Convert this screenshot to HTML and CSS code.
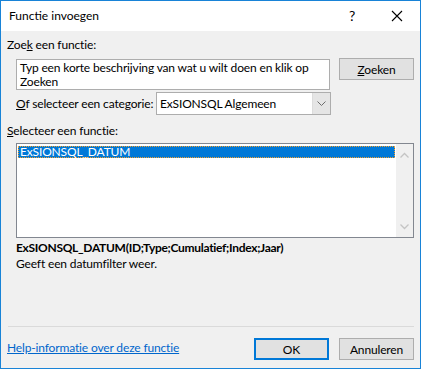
FILE: index.html
```
<!DOCTYPE html>
<html lang="nl">
<head>
    <meta charset="UTF-8">
    <title>Functie invoegen</title>
    <link rel="stylesheet" href="styles.css">
</head>
<body>
    <div class="dialog">
        <div class="title-bar">
            <span class="title-text">Functie invoegen</span>
            <span class="title-help">?</span>
            <svg class="title-close" width="12" height="12" viewBox="0 0 12 12">
                <path d="M1 1L11 11M11 1L1 11" stroke="#000" stroke-width="1.1" fill="none"/>
            </svg>
        </div>
        <div class="content">
            <div class="label">Zoe<u>k</u> een functie:</div>
            <div class="search-row">
                <div class="search-box">Typ een korte beschrijving van wat u wilt doen en klik op Zoeken</div>
                <button class="btn btn-search"><u>Z</u>oeken</button>
            </div>
            <div class="category-row">
                <span class="category-label"><u>O</u>f selecteer een categorie:</span>
                <div class="select">
                    <span class="select-value">ExSIONSQL Algemeen</span>
                    <span class="select-arrow">
                        <svg width="9" height="6" viewBox="0 0 9 6"><path d="M0.5 0.5L4.5 4.5L8.5 0.5" stroke="#6d6d6d" fill="none"/></svg>
                    </span>
                </div>
            </div>
            <div class="label label-list"><u>S</u>electeer een functie:</div>
            <div class="listbox">
                <div class="list-items">
                    <div class="list-item selected">ExSIONSQL_DATUM</div>
                </div>
                <div class="scrollbar">
                    <svg width="9" height="6" viewBox="0 0 9 6"><path d="M0.5 5.5L4.5 1.5L8.5 5.5" stroke="#c4c4c4" stroke-width="1.3" fill="none"/></svg>
                    <svg width="9" height="6" viewBox="0 0 9 6"><path d="M0.5 0.5L4.5 4.5L8.5 0.5" stroke="#c4c4c4" stroke-width="1.3" fill="none"/></svg>
                </div>
            </div>
            <div class="signature">ExSIONSQL_DATUM(ID;Type;Cumulatief;Index;Jaar)</div>
            <div class="description">Geeft een datumfilter weer.</div>
            <div class="separator"></div>
            <div class="footer">
                <a class="help-link" href="#">Help-informatie over deze functie</a>
                <button class="btn btn-ok">OK</button>
                <button class="btn">Annuleren</button>
            </div>
        </div>
    </div>
</body>
</html>
```

FILE: styles.css
```
body {
    margin: 0;
    font-family: Lato, 'Noto Sans', sans-serif;
    font-size: 12px;
    letter-spacing: -0.15px;
    color: #000;
}
.dialog {
    width: 421px;
    height: 369px;
    box-sizing: border-box;
    border: 1px solid #1883d7;
    background: #f0f0f0;
    display: flex;
    flex-direction: column;
}
.title-bar {
    height: 30px;
    background: #fff;
    display: flex;
    align-items: center;
    padding-left: 8px;
}
.title-text {
    flex: 1;
    font-size: 12px;
    letter-spacing: 0;
    margin-top: -1px;
}
.title-help {
    font-size: 14px;
    margin-right: 36px;
    margin-top: -2px;
}
.title-close {
    margin-right: 17px;
}
.content {
    padding: 0 6px 0 6px;
    display: flex;
    flex-direction: column;
}
.label {
    line-height: 16px;
    margin-top: 6px;
}
.label-list {
    margin-top: 8px;
}
.search-row {
    display: flex;
    align-items: flex-start;
    margin-top: 6px;
    margin-left: 9px;
}
.search-box {
    width: 314px;
    height: 31px;
    box-sizing: border-box;
    border: 1px solid #adadad;
    background: #fff;
    padding: 1px 3px;
    line-height: 14px;
}
.btn {
    width: 75px;
    height: 22px;
    box-sizing: border-box;
    border: 1px solid #adadad;
    background: #e1e1e1;
    font-family: inherit;
    font-size: 12px;
    letter-spacing: inherit;
    padding: 0;
    color: #000;
}
.btn-search {
    margin-left: 9px;
    margin-top: -1px;
}
.category-row {
    display: flex;
    align-items: center;
    margin-top: 2px;
    margin-left: 9px;
}
.category-label {
    width: 140px;
    white-space: nowrap;
}
.select {
    width: 175px;
    height: 23px;
    box-sizing: border-box;
    border: 1px solid #adadad;
    background: #fff;
    display: flex;
}
.select-value {
    flex: 1;
    line-height: 21px;
    padding-left: 3px;
}
.select-arrow {
    width: 17px;
    background: #e5e5e5;
    border-left: 1px solid #dcdcdc;
    display: flex;
    align-items: center;
    justify-content: center;
}
.listbox {
    margin: 4px 0 0 9px;
    width: 398px;
    height: 95px;
    box-sizing: border-box;
    border: 1px solid #828790;
    background: #fff;
    display: flex;
}
.list-items {
    flex: 1;
    padding: 2px 1px;
}
.list-item {
    height: 12px;
    line-height: 12px;
    padding-left: 2px;
}
.list-item.selected {
    background: #0078d7;
    color: #fff;
    outline: 1px dotted #f0a030;
    outline-offset: -1px;
}
.scrollbar {
    width: 17px;
    background: #f0f0f0;
    display: flex;
    flex-direction: column;
    justify-content: space-between;
    align-items: center;
    padding: 8px 0 7px 0;
    box-sizing: border-box;
}
.signature {
    font-weight: bold;
    letter-spacing: -0.3px;
    margin: 2px 0 0 9px;
    line-height: 16px;
}
.description {
    margin-left: 9px;
    line-height: 16px;
}
.separator {
    height: 1px;
    background: #dadada;
    margin-top: 54px;
    margin-left: 1px;
}
.footer {
    display: flex;
    align-items: center;
    margin-top: 11px;
}
.help-link {
    flex: 1;
    color: #0066cc;
    text-decoration: underline;
    margin-top: -3px;
}
.btn-ok {
    border: 2px solid #0078d7;
    margin-right: 10px;
}
```
